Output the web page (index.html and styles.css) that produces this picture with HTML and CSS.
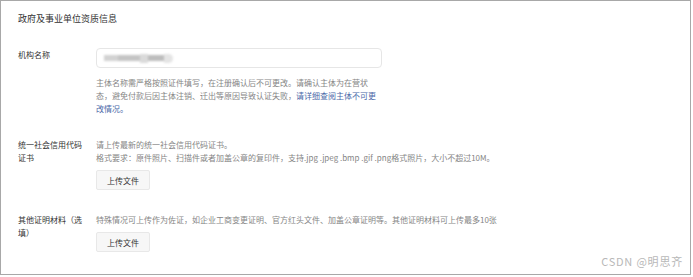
FILE: index.html
```html
<!DOCTYPE html>
<html lang="zh-CN">
<head>
<meta charset="utf-8"/>
<title>政府及事业单位资质信息</title>
<link rel="stylesheet" href="styles.css">
</head>
<body>
<div class="frame">
  <h3 class="title">政府及事业单位资质信息</h3>

  <div class="row">
    <div class="label">机构名称</div>
    <div class="field">
      <div class="input">
        <span class="blur">
          <i class="b1"></i><i class="b2"></i><i class="b3"></i><i class="b4"></i><i class="b5"></i>
        </span>
      </div>
      <p class="tip narrow">主体名称需严格按照证件填写，在注册确认后不可更改。请确认主体为在营状<br/>态，避免付款后因主体注销、迁出等原因导致认证失败，<span class="link">请详细查阅主体不可更<br/>改情况。</span></p>
    </div>
  </div>

  <div class="row">
    <div class="label">统一社会信用代码证书</div>
    <div class="field">
      <p class="tip">请上传最新的统一社会信用代码证书。<br/>格式要求：原件照片、扫描件或者加盖公章的复印件，支持.jpg .jpeg .bmp .gif .png格式照片，大小不超过10M。</p>
      <button class="upload">上传文件</button>
    </div>
  </div>

  <div class="row">
    <div class="label">其他证明材料（选填）</div>
    <div class="field">
      <p class="tip">特殊情况可上传作为佐证，如企业工商变更证明、官方红头文件、加盖公章证明等。其他证明材料可上传最多10张</p>
      <button class="upload">上传文件</button>
    </div>
  </div>

  <div class="watermark">CSDN @明思齐</div>
</div>
</body>
</html>
```

FILE: styles.css
```css
  body {
    margin: 0;
    background: #ffffff;
    font-family: "Noto Sans CJK SC", "Noto Sans", sans-serif;
    color: #333333;
  }
  .frame {
    position: relative;
    box-sizing: border-box;
    width: 691px;
    height: 275px;
    border: 1px solid #a8a8a8;
    padding: 11px 17px 0;
  }
  .title {
    margin: 0;
    font-size: 9px;
    line-height: 13px;
    font-weight: normal;
    color: #333333;
  }
  .row {
    display: grid;
    grid-template-columns: 78px 1fr;
    margin-top: 23px;
  }
  .label {
    width: 68px;
    font-size: 8px;
    line-height: 13px;
    color: #333333;
  }
  .input {
    box-sizing: border-box;
    width: 286px;
    height: 20px;
    border: 1px solid #e6e6e6;
    border-radius: 4px;
    display: flex;
    align-items: center;
    padding-left: 7px;
  }
  .blur {
    display: flex;
    align-items: center;
    filter: blur(1.2px);
  }
  .blur i {
    display: block;
    height: 6px;
  }
  .b1 { width: 14px; background: #d2d2d2; }
  .b2 { width: 22px; background: #c4c4c4; }
  .b3 { width: 8px; height: 9px !important; background: #dadada; }
  .b4 { width: 16px; background: #bdbdbd; }
  .b5 { width: 9px; height: 9px !important; background: #e4e4e4; border-radius: 0 5px 5px 0; }
  .tip {
    margin: 0;
    font-size: 8px;
    line-height: 13px;
    color: #858585;
    white-space: nowrap;
  }
  .tip.narrow {
    margin-top: 8px;
    width: 286px;
  }
  .link {
    color: #4a68a8;
  }
  .upload {
    display: block;
    margin-top: 6px;
    width: 54px;
    height: 20px;
    padding: 0;
    border: 1px solid #e8e8e8;
    border-radius: 2px;
    background: #f7f7f7;
    font-family: inherit;
    font-size: 8px;
    color: #333333;
  }
  .watermark {
    position: absolute;
    right: 7px;
    bottom: 5px;
    font-size: 11px;
    letter-spacing: 0.8px;
    color: #b8b8b8;
  }
```
